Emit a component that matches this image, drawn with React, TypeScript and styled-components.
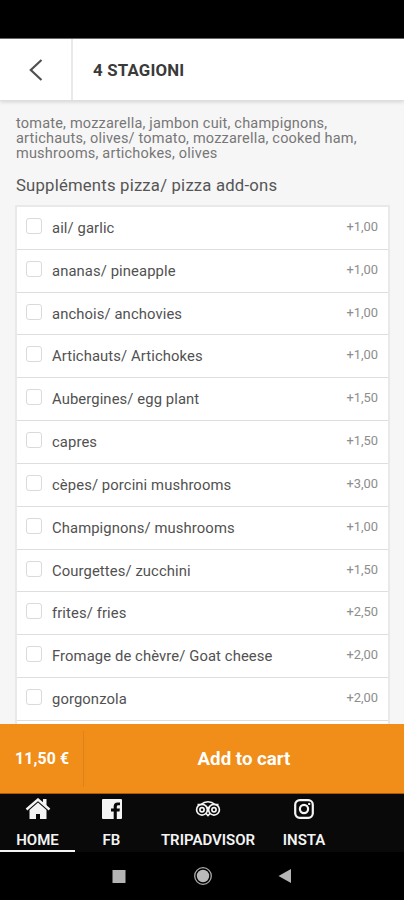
import React from 'react';
import styled, { createGlobalStyle } from 'styled-components';

const GlobalStyle = createGlobalStyle`
  * { box-sizing: border-box; }
  body { margin: 0; background: #000; font-family: Roboto, "Liberation Sans", sans-serif; }
  button { font: inherit; border: 0; padding: 0; background: none; color: inherit; }
`;

const Screen = styled.div`
  width: 404px;
  height: 900px;
  display: flex;
  flex-direction: column;
  overflow: hidden;
  background: #000;
`;

const StatusBar = styled.div`
  height: 39px;
  flex: none;
  border-bottom: 1px solid #6b6b6b;
`;

const Header = styled.header`
  height: 62px;
  flex: none;
  display: flex;
  align-items: stretch;
  background: #fff;
  border-bottom: 1px solid #dedede;
  box-shadow: 0 1px 4px rgba(0, 0, 0, 0.14);
  z-index: 1;
`;

const BackButton = styled.button`
  width: 73px;
  display: flex;
  align-items: center;
  justify-content: center;
  padding-left: 1px;
  border-right: 2px solid #e9e9e9;
`;

const Title = styled.h1`
  margin: 0 0 0 20px;
  align-self: center;
  font-size: 16.8px;
  line-height: 20px;
  font-weight: 700;
  letter-spacing: 0.2px;
  color: #3a3a3a;
`;

const Content = styled.main`
  flex: 1;
  min-height: 0;
  overflow: hidden;
  padding: 15px 14px 0 15px;
  background: #f6f6f6;
`;

const Description = styled.p`
  margin: 0 0 0 1px;
  font-size: 14.5px;
  line-height: 15px;
  letter-spacing: 0.2px;
  color: #777;
  white-space: nowrap;
`;

const GroupTitle = styled.h2`
  margin: 15px 0 9px 1px;
  font-size: 16.7px;
  line-height: 20px;
  font-weight: 400;
  letter-spacing: 0.2px;
  color: #555;
`;

const Options = styled.div`
  border: 2px solid #e9e9e9;
  border-bottom: 0;
  background: #fff;
`;

const Option = styled.label`
  height: 42.83px;
  display: flex;
  align-items: center;
  padding: 0 10px 0 9px;
  border-bottom: 1px solid #dedede;
`;

const CheckBox = styled.span`
  width: 16px;
  height: 16px;
  margin: 0 10px 4px 0;
  border: 1px solid #dadada;
  border-radius: 3px;
  background: #fff;
`;

const OptionName = styled.span`
  flex: 1;
  font-size: 14.8px;
  line-height: 20px;
  letter-spacing: 0.1px;
  color: #515151;
`;

const OptionPrice = styled.span`
  font-size: 12.9px;
  line-height: 20px;
  margin-bottom: 2px;
  color: #8d8d8d;
`;

const CartBar = styled.div`
  height: 70px;
  flex: none;
  display: flex;
  align-items: center;
  background: #f08e19;
  color: #fff;
  font-weight: 700;
  border-bottom: 1px solid #a45d0c;
`;

const Total = styled.div`
  width: 84px;
  height: 56px;
  display: flex;
  align-items: center;
  padding-left: 15px;
  font-size: 15.8px;
  letter-spacing: 0.15px;
  border-right: 1px solid #db8218;
`;

const AddButton = styled.button`
  flex: 1;
  font-size: 18.7px;
  line-height: 24px;
`;

const Tabs = styled.nav`
  height: 58px;
  flex: none;
  display: flex;
  background: #090909;
  color: #f4f4f4;
`;

const Tab = styled.div<{ $width: number; $active?: boolean }>`
  width: ${(p) => p.$width}px;
  display: flex;
  flex-direction: column;
  align-items: center;
  padding-top: 1px;
  border-bottom: 2px solid ${(p) => (p.$active ? '#f4f4f4' : 'transparent')};
`;

const TabIcon = styled.span`
  height: 29px;
  display: flex;
  align-items: center;
  justify-content: center;
`;

const TabLabel = styled.span`
  margin-top: 8px;
  font-size: 15px;
  line-height: 20px;
  font-weight: 600;
`;

const SystemBar = styled.footer`
  height: 48px;
  flex: none;
  display: flex;
  align-items: center;
  gap: 66px;
  padding-left: 110px;
  background: #000;
`;

const options: [string, string][] = [
  ['ail/ garlic', '+1,00'],
  ['ananas/ pineapple', '+1,00'],
  ['anchois/ anchovies', '+1,00'],
  ['Artichauts/ Artichokes', '+1,00'],
  ['Aubergines/ egg plant', '+1,50'],
  ['capres', '+1,50'],
  ['cèpes/ porcini mushrooms', '+3,00'],
  ['Champignons/ mushrooms', '+1,00'],
  ['Courgettes/ zucchini', '+1,50'],
  ['frites/ fries', '+2,50'],
  ['Fromage de chèvre/ Goat cheese', '+2,00'],
  ['gorgonzola', '+2,00'],
];

const HomeIcon = () => (
  <svg width="26" height="22" viewBox="0 0 26 22">
    <path d="M1.500 11.500 13 1.500l11.500 10" fill="none" stroke="#f4f4f4" strokeWidth="2.400" />
    <path d="M18 1h3.500v8L18 6zM13 4.600l8.500 7.500V21H15v-5h-4v5H4.500v-8.900z" fill="#f4f4f4" />
  </svg>
);

const FacebookIcon = () => (
  <svg width="20" height="20" viewBox="0 0 20 20">
    <path
      d="M1 0h18a1 1 0 0 1 1 1v18a1 1 0 0 1-1 1h-4.200v-7.500h2.700l.4-3h-3.100V7.700c0-.9.400-1.500 1.600-1.500H18V3.400h-2.400c-2.500 0-3.900 1.400-3.900 3.900v2.200H9v3h2.700V20H1a1 1 0 0 1-1-1V1a1 1 0 0 1 1-1z"
      fill="#f4f4f4"
    />
  </svg>
);

const TripadvisorIcon = () => (
  <svg width="26" height="18" viewBox="0 0 26 18" fill="none" stroke="#f4f4f4" strokeWidth="1.700">
    <path d="M2.500 4.500H6C10 .8 16 .8 20 4.500h3.500" />
    <circle cx="7" cy="9.700" r="5.400" />
    <circle cx="19" cy="9.700" r="5.400" />
    <circle cx="7" cy="9.700" r="2.100" />
    <circle cx="19" cy="9.700" r="2.100" />
    <path d="m11 13.500 2 2 2-2M11.800 7 13 9l1.200-2" />
  </svg>
);

const InstagramIcon = () => (
  <svg width="20" height="20" viewBox="0 0 20 20" fill="none" stroke="#f4f4f4">
    <rect x="1.200" y="1.200" width="17.600" height="17.600" rx="4.500" strokeWidth="2.200" />
    <circle cx="10" cy="10" r="4.100" strokeWidth="2.200" />
    <circle cx="15.200" cy="4.900" r="1.200" fill="#f4f4f4" stroke="none" />
  </svg>
);

export default function App() {
  return (
    <Screen>
      <GlobalStyle />
      <StatusBar />
      <Header>
        <BackButton aria-label="Back">
          <svg width="14" height="22" viewBox="0 0 14 22" fill="none" stroke="#505050" strokeWidth="2.200">
            <path d="M12.500 1 1.800 11l10.700 10" />
          </svg>
        </BackButton>
        <Title>4 STAGIONI</Title>
      </Header>
      <Content>
        <Description>
          tomate, mozzarella, jambon cuit, champignons,
          <br />
          artichauts, olives/ tomato, mozzarella, cooked ham,
          <br />
          mushrooms, artichokes, olives
        </Description>
        <GroupTitle>Suppléments pizza/ pizza add-ons</GroupTitle>
        <Options>
          {options.map(([name, price]) => (
            <Option key={name}>
              <CheckBox />
              <OptionName>{name}</OptionName>
              <OptionPrice>{price}</OptionPrice>
            </Option>
          ))}
          <Option />
        </Options>
      </Content>
      <CartBar>
        <Total>11,50 €</Total>
        <AddButton>Add to cart</AddButton>
      </CartBar>
      <Tabs>
        <Tab $width={75} $active>
          <TabIcon><HomeIcon /></TabIcon>
          <TabLabel>HOME</TabLabel>
        </Tab>
        <Tab $width={73}>
          <TabIcon><FacebookIcon /></TabIcon>
          <TabLabel>FB</TabLabel>
        </Tab>
        <Tab $width={120}>
          <TabIcon><TripadvisorIcon /></TabIcon>
          <TabLabel>TRIPADVISOR</TabLabel>
        </Tab>
        <Tab $width={72}>
          <TabIcon><InstagramIcon /></TabIcon>
          <TabLabel>INSTA</TabLabel>
        </Tab>
      </Tabs>
      <SystemBar>
        <svg width="18" height="18" viewBox="0 0 18 18">
          <path d="M2.500 3h13v13h-13z" fill="#b5b5b5" />
        </svg>
        <svg width="18" height="20" viewBox="0 0 18 20">
          <circle cx="9" cy="10" r="8.300" fill="none" stroke="#aaa" strokeWidth="1.300" />
          <circle cx="9" cy="10" r="6.200" fill="#b9b9b9" />
        </svg>
        <svg width="14" height="16" viewBox="0 0 14 16">
          <path d="M13 1v14L.5 8z" fill="#b5b5b5" />
        </svg>
      </SystemBar>
    </Screen>
  );
}
